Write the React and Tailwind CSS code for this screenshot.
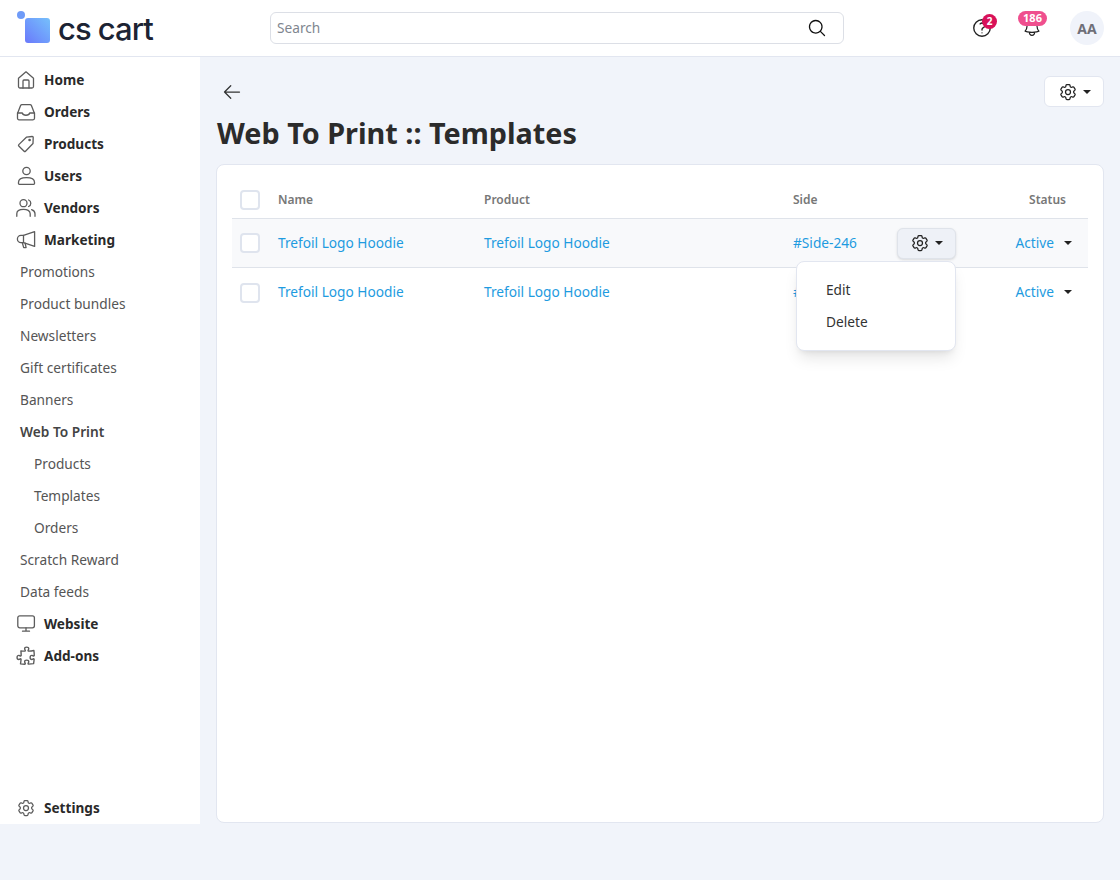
import { HiOutlineCog6Tooth, HiOutlinePuzzlePiece, HiOutlineArrowLeft, HiOutlineBell, HiOutlineQuestionMarkCircle } from "react-icons/hi2";
import { PiMagnifyingGlass } from "react-icons/pi";

const font = { fontFamily: '"Noto Sans", sans-serif' };

function Svg({ children }) {
    return (
        <svg viewBox="0 0 20 20" fill="none" stroke="#5c5c5c" strokeWidth="1.3" strokeLinejoin="round" strokeLinecap="round" className="w-5 h-5 shrink-0">
            {children}
        </svg>
    );
}

const HomeIcon = () => (
    <Svg>
        <path d="M2.5 8.2 10 1.8l7.5 6.4v8.3a1.5 1.5 0 0 1-1.5 1.5H4a1.5 1.5 0 0 1-1.5-1.5Z" />
        <path d="M7 18v-7a1 1 0 0 1 1-1h4a1 1 0 0 1 1 1v7" />
    </Svg>
);
const TrayIcon = () => (
    <Svg>
        <path d="M1.5 11.5 4.6 3.6A1.5 1.5 0 0 1 6 2.7h8a1.5 1.5 0 0 1 1.4.9l3.1 7.9v4.8a1.5 1.5 0 0 1-1.5 1.5H3a1.5 1.5 0 0 1-1.5-1.5Z" />
        <path d="M1.5 11h4.8c.7 3 6.7 3 7.4 0h4.8" />
    </Svg>
);
const TagIcon = () => (
    <Svg>
        <path d="m2.8 10.6 7.6-7.4 5.7-.7a1 1 0 0 1 1.1 1.1l-.2 5.9-7.5 7.7a1 1 0 0 1-1.4 0l-5.3-5.2a1 1 0 0 1 0-1.4Z" />
        <circle cx="13.6" cy="6" r=".7" />
    </Svg>
);
const UserIcon = () => (
    <Svg>
        <circle cx="10.5" cy="5" r="3.7" />
        <path d="M2.5 16.2c0-3 3.6-4.6 8-4.6s8 1.6 8 4.6v1.3a.8.8 0 0 1-.8.8H3.3a.8.8 0 0 1-.8-.8Z" />
    </Svg>
);
const UsersIcon = () => (
    <Svg>
        <circle cx="7.5" cy="5.2" r="3.5" />
        <path d="M.8 18.3v-2.6c0-2.9 3-4.4 6.7-4.4s6.7 1.5 6.7 4.4v2.6" />
        <path d="M12.6 2a3.5 3.5 0 0 1 0 6.5" />
        <path d="M15.6 11.6c2 .7 3.4 2 3.4 4.1v2.6" />
    </Svg>
);
const MegaphoneIcon = () => (
    <Svg>
        <path d="M18.6 1.6v14.8L7.5 12.6V5.4Z" />
        <path d="M7.5 5.4H5a3.6 3.6 0 0 0 0 7.2h2.5" />
        <path d="m6.3 12.8 1.4 4.8h2.4l-1-4.4" />
    </Svg>
);
const DesktopIcon = () => (
    <Svg>
        <rect x="1.8" y="1.8" width="16.6" height="12" rx="2" />
        <path d="M10 13.8v3.2M6.5 17.2h7" />
    </Svg>
);
const PuzzleIcon = () => <HiOutlinePuzzlePiece className="w-[22px] h-[22px] -mx-px text-[#5c5c5c] shrink-0" />;
const GearIcon = () => <HiOutlineCog6Tooth className="w-5 h-5 text-[#5c5c5c] shrink-0" />;

const topItems = [
    { label: "Home", Icon: HomeIcon },
    { label: "Orders", Icon: TrayIcon },
    { label: "Products", Icon: TagIcon },
    { label: "Users", Icon: UserIcon },
    { label: "Vendors", Icon: UsersIcon },
    { label: "Marketing", Icon: MegaphoneIcon },
];

const subItems = [
    { label: "Promotions" },
    { label: "Product bundles" },
    { label: "Newsletters" },
    { label: "Gift certificates" },
    { label: "Banners" },
    { label: "Web To Print", active: true },
    { label: "Products", nested: true },
    { label: "Templates", nested: true },
    { label: "Orders", nested: true },
    { label: "Scratch Reward" },
    { label: "Data feeds" },
];

function Caret({ className }) {
    return <span className={`inline-block w-0 h-0 border-x-[4px] border-x-transparent border-t-[4px] border-t-[#222] ${className || ""}`}></span>;
}

function MainLink({ label, Icon }) {
    return (
        <div className="h-8 flex items-center pl-4">
            <Icon />
            <span className="ml-2 text-[13.6px] font-bold text-[#2a2a2a]">{label}</span>
        </div>
    );
}

function Checkbox() {
    return <span className="block w-5 h-5 rounded-[4px] bg-white border-2 border-[#dfe4ee]"></span>;
}

function Row({ hovered, last, children }) {
    return (
        <div className={`h-[49px] flex items-center text-[13.7px] text-[#1e9be0] ${last ? "" : "border-b border-[#dfe3ea]"} ${hovered ? "bg-[#f8f9fb]" : ""}`}>
            <div className="w-[46px] pl-2 shrink-0"><Checkbox /></div>
            <div className="w-[206px] shrink-0">Trefoil Logo Hoodie</div>
            <div className="w-[309px] shrink-0">Trefoil Logo Hoodie</div>
            <div className="w-[104px] shrink-0">#Side-246</div>
            <div className="w-[59px] shrink-0">{children}</div>
            <div className="ml-auto flex items-center pr-4">
                Active
                <Caret className="ml-[10px]" />
            </div>
        </div>
    );
}

export default function App() {
    return (
        <div className="w-[1120px] h-[880px] bg-[#f1f4fa] overflow-hidden" style={font}>
            <header className="h-[57px] bg-white border-b border-[#e2e6f0] flex items-center">
                <div className="w-[270px] shrink-0 pl-[17px] flex items-center">
                    <div className="relative w-[33px] h-[33px] mt-[-1px]">
                        <span className="absolute left-0 top-0 w-2 h-2 rounded-full bg-[#6f9bf8]"></span>
                        <span className="absolute left-2 top-[7px] w-[25px] h-[25px] rounded-[3px] bg-gradient-to-tr from-[#6a78fb] to-[#76c0fb]"></span>
                    </div>
                    <span className="ml-2 text-[31px] leading-none font-medium text-[#1c2333] tracking-[-1px]" style={{ fontFamily: "Inter, sans-serif" }}>cs cart</span>
                </div>
                <div className="w-[574px] h-8 rounded-md border border-[#dcdfe6] bg-white flex items-center justify-between pl-[6px] pr-[16px]">
                    <span className="text-[13.7px] text-[#80868f]">Search</span>
                    <PiMagnifyingGlass className="w-5 h-5 text-[#111]" />
                </div>
                <div className="relative ml-[127px] w-[22px] h-[22px]">
                    <HiOutlineQuestionMarkCircle className="w-[22px] h-[22px] text-[#222]" />
                    <span className="absolute left-[11px] -top-[3px] w-[15px] h-[15px] rounded-full bg-[#d81159] text-white text-[10px] font-bold flex items-center justify-center">2</span>
                </div>
                <div className="relative ml-[29px] w-5 h-5">
                    <HiOutlineBell className="w-5 h-5 text-[#222]" />
                    <span className="absolute -left-[4px] -top-[7px] w-[29px] h-[15px] rounded-full bg-[#ef4f8e] text-white text-[11px] font-bold flex items-center justify-center">186</span>
                </div>
                <div className="ml-[28px] w-[34px] h-[34px] rounded-full bg-[#f0f3fa] text-[#6f6f78] text-[14px] font-bold flex items-center justify-center">AA</div>
            </header>

            <div className="flex h-[767px]">
                <aside className="w-[200px] shrink-0 bg-white flex flex-col pt-[7px]">
                    {topItems.map((item) => (
                        <MainLink key={item.label} label={item.label} Icon={item.Icon} />
                    ))}
                    {subItems.map((item) => (
                        <div key={item.label + (item.nested ? "-sub" : "")} className={`h-8 flex items-center text-[13.7px] ${item.nested ? "pl-[34px]" : "pl-5"} ${item.active ? "font-semibold text-[#444]" : "text-[#555]"}`}>
                            {item.label}
                        </div>
                    ))}
                    <MainLink label="Website" Icon={DesktopIcon} />
                    <MainLink label="Add-ons" Icon={PuzzleIcon} />
                    <div className="mt-auto">
                        <MainLink label="Settings" Icon={GearIcon} />
                    </div>
                </aside>

                <main className="flex-1 pl-4 pr-4 flex flex-col">
                    <div className="flex items-start justify-between pt-[19px]">
                        <HiOutlineArrowLeft className="w-5 h-5 text-[#333] ml-[6px] mt-[6px]" />
                        <button className="w-[60px] h-[31px] rounded-md bg-white border border-[#e2e6f0] flex items-center justify-center gap-[5px]">
                            <HiOutlineCog6Tooth className="w-5 h-5 text-[#222]" />
                            <Caret />
                        </button>
                    </div>
                    <h1 className="ml-px text-[28.8px] leading-[40px] font-bold text-[#2b2b2b] mt-[6px]">Web To Print :: Templates</h1>
                    <div className="mt-[11px] h-[659px] bg-white rounded-lg border border-[#e2e6f0] px-[15px] pt-4">
                        <div className="relative">
                            <div className="h-[38px] border-b border-[#dfe3ea] flex items-center text-[12px] font-semibold text-[#777]">
                                <div className="w-[46px] pl-2 shrink-0"><Checkbox /></div>
                                <div className="w-[206px] shrink-0">Name</div>
                                <div className="w-[309px] shrink-0">Product</div>
                                <div>Side</div>
                                <div className="ml-auto pr-[22px]">Status</div>
                            </div>
                            <Row hovered>
                                <button className="w-[59px] h-[31px] rounded-md bg-[#eef1f7] border border-[#dfe3ea] shadow-sm flex items-center justify-center gap-[5px]">
                                    <HiOutlineCog6Tooth className="w-5 h-5 text-[#222]" />
                                    <Caret />
                                </button>
                            </Row>
                            <Row last />
                            {/* dropdown for the first row */}
                            <div className="absolute left-[564px] top-[80px] w-[160px] h-[90px] rounded-lg bg-white border border-[#e2e6f0] shadow-lg py-3 text-[13.7px] text-[#333]">
                                <div className="h-8 flex items-center pl-[29px]">Edit</div>
                                <div className="h-8 flex items-center pl-[29px]">Delete</div>
                            </div>
                        </div>
                    </div>
                </main>
            </div>
        </div>
    );
}
